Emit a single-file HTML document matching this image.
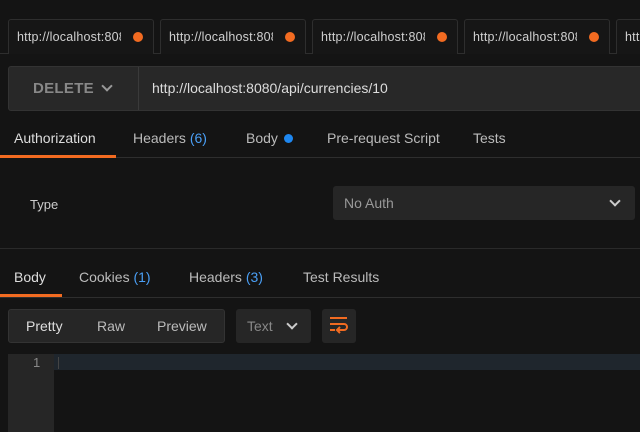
<!DOCTYPE html><html><head><style>
*{margin:0;padding:0;box-sizing:border-box}
body{width:640px;height:432px;background:#141414;font-family:"Liberation Sans",sans-serif;color:#ccc;position:relative;overflow:hidden;font-size:14px}
.a{position:absolute}
.tab{top:19px;height:35px;width:146px;border:1px solid #2e2e2e;border-bottom:none;border-radius:3px 3px 0 0;background:#161616;font-size:12.5px;color:#d0d0d0;}
.tab span{position:absolute;left:8px;top:10px;width:104px;overflow:hidden;white-space:nowrap;letter-spacing:.2px}
.tab i{position:absolute;right:10px;top:12px;width:10px;height:10px;border-radius:50%;background:#f26b21}
.chev{display:inline-block;width:8px;height:8px;border-right:2px solid #ccc;border-bottom:2px solid #ccc;transform:rotate(45deg)}
.b{color:#4a9ff5}
</style></head><body>
<div class="a" style="top:53px;left:0;width:640px;height:1px;background:#2e2e2e"></div>
<div class="a tab" style="left:8px"><span>http://localhost:8080</span><i></i></div>
<div class="a tab" style="left:160px"><span>http://localhost:8080</span><i></i></div>
<div class="a tab" style="left:312px"><span>http://localhost:8080</span><i></i></div>
<div class="a tab" style="left:464px"><span>http://localhost:8080</span><i></i></div>
<div class="a tab" style="left:616px"><span>http</span></div>

<div class="a" style="top:66px;left:8px;width:640px;height:45px;background:#282828;border:1px solid #333;border-radius:3px"></div>
<div class="a" style="top:67px;left:138px;width:1px;height:43px;background:#3a3a3a"></div>
<div class="a" style="top:80px;left:33px;font-size:15px;font-weight:bold;color:#888;letter-spacing:.3px">DELETE</div>
<div class="a chev" style="top:82px;left:103px;border-color:#999"></div>
<div class="a" style="top:80px;left:152px;font-size:14px;color:#ddd">http://localhost:8080/api/currencies/10</div>

<div class="a" style="top:130px;left:14px;color:#ddd">Authorization</div>
<div class="a" style="top:130px;left:133px;color:#bbb">Headers <span class="b">(6)</span></div>
<div class="a" style="top:130px;left:246px;color:#bbb">Body</div>
<div class="a" style="top:134px;left:284px;width:9px;height:9px;border-radius:50%;background:#1e87f0"></div>
<div class="a" style="top:130px;left:327px;color:#bbb">Pre-request Script</div>
<div class="a" style="top:130px;left:473px;color:#bbb">Tests</div>
<div class="a" style="top:157px;left:0;width:640px;height:1px;background:#2e2e2e"></div>
<div class="a" style="top:155px;left:0;width:116px;height:3px;background:#f26b21"></div>

<div class="a" style="top:197px;left:30px;font-size:13px;color:#ccc">Type</div>
<div class="a" style="top:186px;left:333px;width:302px;height:34px;background:#262626;border-radius:3px"></div>
<div class="a" style="top:195px;left:344px;color:#999">No Auth</div>
<div class="a chev" style="top:197px;left:611px"></div>

<div class="a" style="top:248px;left:0;width:640px;height:1px;background:#2a2a2a"></div>
<div class="a" style="top:269px;left:14px;color:#ddd">Body</div>
<div class="a" style="top:269px;left:79px;color:#bbb">Cookies <span class="b">(1)</span></div>
<div class="a" style="top:269px;left:189px;color:#bbb">Headers <span class="b">(3)</span></div>
<div class="a" style="top:269px;left:303px;color:#bbb">Test Results</div>
<div class="a" style="top:297px;left:0;width:640px;height:1px;background:#2e2e2e"></div>
<div class="a" style="top:294px;left:0;width:62px;height:3px;background:#f26b21"></div>

<div class="a" style="top:309px;left:8px;width:217px;height:34px;background:#262626;border:1px solid #333;border-radius:3px"></div>
<div class="a" style="top:318px;left:26px;color:#ddd">Pretty</div>
<div class="a" style="top:318px;left:97px;color:#bbb">Raw</div>
<div class="a" style="top:318px;left:157px;color:#bbb">Preview</div>
<div class="a" style="top:309px;left:236px;width:75px;height:34px;background:#262626;border-radius:3px"></div>
<div class="a" style="top:318px;left:247px;color:#888">Text</div>
<div class="a chev" style="top:320px;left:288px"></div>
<div class="a" style="top:309px;left:322px;width:34px;height:34px;background:#262626;border-radius:3px"></div>
<svg class="a" style="top:316px;left:329px" width="20" height="20" viewBox="0 0 20 20" fill="none" stroke="#f26b21" stroke-width="2"><path d="M1 2h17M1 8h14a3 3 0 0 1 0 6H9M11 11l-3 3 3 3M1 14h5"/></svg>

<div class="a" style="top:354px;left:8px;width:632px;height:78px;background:#141414;border-top:1px solid #2a2a2a"></div>
<div class="a" style="top:354px;left:8px;width:46px;height:78px;background:#262626"></div>
<div class="a" style="top:354px;left:54px;width:586px;height:16px;background:#1f262d"></div>
<div class="a" style="top:355px;left:33px;font-size:13px;color:#888">1</div>
<div class="a" style="top:357px;left:58px;width:1px;height:12px;background:#444"></div>
</body></html>
